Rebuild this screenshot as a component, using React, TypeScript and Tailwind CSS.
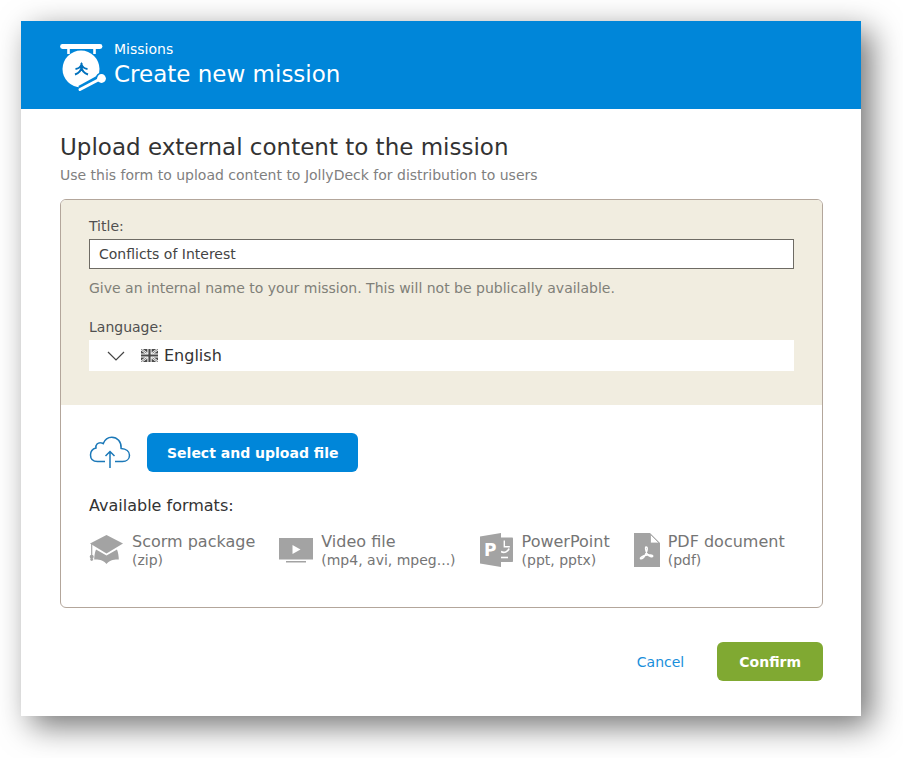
import type { ReactNode } from "react";

const formats = [
  { name: "Scorm package", ext: "(zip)", icon: <ScormIcon /> },
  { name: "Video file", ext: "(mp4, avi, mpeg...)", icon: <VideoIcon /> },
  { name: "PowerPoint", ext: "(ppt, pptx)", icon: <PowerPointIcon /> },
  { name: "PDF document", ext: "(pdf)", icon: <PdfIcon /> },
];

function GongIcon() {
  return (
    <svg width="46" height="56" viewBox="0 -7 46 56" fill="none" aria-hidden="true">
      <path d="M2.500 3.500H40" stroke="#fff" strokeWidth="4.800" strokeLinecap="round" />
      <path d="M8.500 4v7M34.500 4v7" stroke="#fff" strokeWidth="2.600" />
      <circle cx="21" cy="26" r="18.500" fill="#fff" />
      <path d="M20 46L41 34.500" stroke="#0086d9" strokeWidth="7" />
      <circle cx="41.500" cy="35.500" r="6" fill="#0086d9" />
      <path d="M20 46.500L41 35.500" stroke="#fff" strokeWidth="3" strokeLinecap="round" />
      <circle cx="41.500" cy="35.500" r="4.400" fill="#fff" />
      <path
        d="M21.500 20v5.500M15.500 26q4.500-.5 6-4.500q1.500 4 6 4.500M15 31.500q6-2 6.500-7.500q.5 5.500 6.500 7.500"
        stroke="#0071bd"
        strokeWidth="2"
      />
    </svg>
  );
}

function CloudIcon() {
  return (
    <svg width="42" height="34" viewBox="0 0 42 34" fill="none" stroke="#1b78b8" strokeWidth="1.500" aria-hidden="true">
      <path d="M16 25.500H8.500C4 25.500 1.500 22.800 1.500 19c0-3.600 2.300-6.200 5.500-7C6.300 8.500 9 6.600 11.500 6.700c1 0 2 .4 2.700.9C15.800 3.600 19 1.200 22.800 1.200c5.500 0 9.700 4.500 9.300 11.200 5 .3 8.400 3 8.400 6.800 0 3.800-3 6.300-7 6.300H26" />
      <path d="M21 32V15.500M16.500 20L21 15.500l4.500 4.500" />
    </svg>
  );
}

function FlagIcon() {
  return (
    <svg width="17" height="13" viewBox="0 0 17 13" aria-hidden="true">
      <path d="M0 0h17v13H0z" fill="#4b4b4b" />
      <path d="M0 0l17 13M17 0L0 13" stroke="#fff" strokeWidth="2.200" />
      <path d="M0 0l17 13M17 0L0 13" stroke="#4b4b4b" strokeWidth=".7" />
      <path d="M8.500 0v13M0 6.500h17" stroke="#fff" strokeWidth="4.200" />
      <path d="M8.500 0v13M0 6.500h17" stroke="#4b4b4b" strokeWidth="2.200" />
    </svg>
  );
}

function ScormIcon() {
  return (
    <svg width="35" height="30" viewBox="0 0 35 30" aria-hidden="true">
      <path d="M17.500 0L34 8.500 17.500 18.500 1 8.500z" fill="#a3a3a3" />
      <path d="M7 14.500l10.500 6 10.500-6c1.300 3.500 1.800 7 1.800 10-4.800-.3-10 1-12.300 4.500-2.300-3.500-7.500-4.800-12.300-4.500 0-3 .5-6.500 1.800-10z" fill="#a3a3a3" />
      <path d="M2.700 9v12" stroke="#a3a3a3" strokeWidth="1.200" />
      <circle cx="2.700" cy="21.800" r="2" fill="#a3a3a3" />
      <path d="M2.700 21l1.600 4-1.600 1-1.600-1z" fill="#a3a3a3" />
    </svg>
  );
}

function VideoIcon() {
  return (
    <svg width="34" height="25" viewBox="0 0 34 25" aria-hidden="true">
      <path d="M0 0h34v21.500H0zM7 23h20v1.500H7z" fill="#a3a3a3" />
      <path d="M13.500 7v9l8-4.500z" fill="#fff" />
    </svg>
  );
}

function PowerPointIcon() {
  return (
    <svg width="34" height="34" viewBox="0 0 34 34" aria-hidden="true">
      <path d="M20 4.500h12.200q.8 0 .8.800v23q0 .8-.8.800H20z" fill="#a3a3a3" />
      <path d="M24.300 7.500v6.300h5.500" fill="none" stroke="#fff" strokeWidth="1.400" />
      <path d="M29 15.500a5.300 5.300 0 0 1-8 3" fill="none" stroke="#fff" strokeWidth="1.600" />
      <path d="M21 24.500h7" stroke="#fff" strokeWidth="1.600" />
      <path d="M0 3.500L21 0v34L0 30.500z" fill="#a3a3a3" />
      <text x="4" y="23" fill="#fff" fontFamily="Verdana, DejaVu Sans, sans-serif" fontSize="17" fontWeight="700">P</text>
    </svg>
  );
}

function PdfIcon() {
  return (
    <svg width="26" height="34" viewBox="0 0 26 34" aria-hidden="true">
      <path d="M0 0h16l10 10v24H0z" fill="#a3a3a3" />
      <path d="M16.500 1.500v8.500h8.500z" fill="#fff" stroke="#a3a3a3" strokeWidth=".8" />
      <path
        d="M12 14c2.500 0 .8 5-.7 7.800-1.300 2.400-3.300 4.200-4.500 4-1.500-.6 1.500-2.800 5-3.500 3-.6 7.200-.6 7 .9-.3 1.400-3.800.2-5.500-2.200C11.700 18.600 11 14.200 12 14z"
        fill="none"
        stroke="#fff"
        strokeWidth="1.400"
      />
    </svg>
  );
}

function Format({ name, ext, icon }: { name: string; ext: string; icon: ReactNode }) {
  return (
    <li className="flex items-center gap-2">
      {icon}
      <div className="whitespace-nowrap text-[#757575]">
        <p className="text-base leading-5">{name}</p>
        <p className="text-sm leading-4">{ext}</p>
      </div>
    </li>
  );
}

export default function App() {
  return (
    <div className="bg-white pt-[21px] pr-[42px] pb-[42px] pl-[21px] font-['Verdana','DejaVu_Sans',sans-serif]">
      <main className="bg-white shadow-[10px_10px_30px_rgba(0,0,0,0.55)]">
        <header className="flex h-[88px] items-center gap-2 bg-[#0086d9] pr-[38px] pb-0.5 pl-[39px] text-white">
          <GongIcon />
          <div>
            <p className="text-sm leading-5">Missions</p>
            <h1 className="text-[23px] leading-[30px]">Create new mission</h1>
          </div>
        </header>
        <form className="pt-5 pr-[38px] pb-[35px] pl-[39px]">
          <h2 className="text-[23px] leading-9 text-[#333]">Upload external content to the mission</h2>
          <p className="text-sm leading-5 text-[#808080]">Use this form to upload content to JollyDeck for distribution to users</p>
          <div className="mt-[14px] overflow-hidden rounded-md border border-[#b3a69b]">
            <section className="bg-[#f1ede0] px-7 pt-4 pb-[34px] text-sm">
              <label htmlFor="title" className="mb-[3px] block leading-5 text-[#505050]">Title:</label>
              <input
                id="title"
                defaultValue="Conflicts of Interest"
                className="block h-[30px] w-full border border-[#6e6b64] bg-white px-[9px] text-[#444] outline-none"
              />
              <p className="mt-2 leading-[22px] text-[#808078]">Give an internal name to your mission. This will not be publically available.</p>
              <label htmlFor="language" className="mt-[18px] mb-[3px] block leading-5 text-[#505050]">Language:</label>
              <div className="relative">
                <select id="language" className="block h-[31px] w-full appearance-none bg-white pl-[75px] text-base text-[#333] outline-none">
                  <option>English</option>
                </select>
                <div className="pointer-events-none absolute inset-y-0 left-[18px] flex items-center gap-4">
                  <svg width="18" height="10" viewBox="0 0 18 10" fill="none" stroke="#444" strokeWidth="1.200" aria-hidden="true">
                    <path d="M1 1l8 8 8-8" />
                  </svg>
                  <FlagIcon />
                </div>
              </div>
            </section>
            <section className="px-7 pt-7 pb-[39px]">
              <div className="flex items-center gap-4">
                <CloudIcon />
                <button type="button" className="h-[39px] rounded-md bg-[#0086d9] px-5 text-sm font-bold text-white">
                  Select and upload file
                </button>
              </div>
              <h3 className="mt-[22px] text-base leading-6 text-[#333]">Available formats:</h3>
              <ul className="mt-[14px] flex gap-6">
                {formats.map((format) => (
                  <Format key={format.name} {...format} />
                ))}
              </ul>
            </section>
          </div>
          <div className="mt-[34px] flex items-center justify-end gap-[33px]">
            <a href="#" className="text-sm text-[#1a8fdb]">Cancel</a>
            <button type="submit" className="h-[39px] rounded-md bg-[#80a932] px-[22px] text-sm font-bold text-white">
              Confirm
            </button>
          </div>
        </form>
      </main>
    </div>
  );
}
